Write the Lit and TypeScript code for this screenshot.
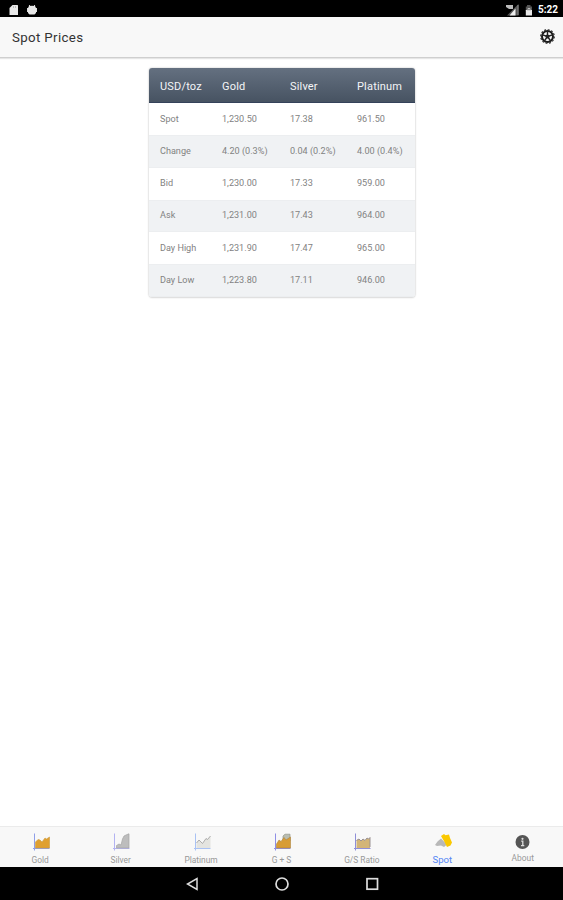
import { LitElement, html, svg, css } from "lit";
import { customElement } from "lit/decorators.js";
import { classMap } from "lit/directives/class-map.js";

const HEAD = ["USD/toz", "Gold", "Silver", "Platinum"];
const ROWS = [
  ["Spot", "1,230.50", "17.38", "961.50"],
  ["Change", "4.20 (0.3%)", "0.04 (0.2%)", "4.00 (0.4%)"],
  ["Bid", "1,230.00", "17.33", "959.00"],
  ["Ask", "1,231.00", "17.43", "964.00"],
  ["Day High", "1,231.90", "17.47", "965.00"],
  ["Day Low", "1,223.80", "17.11", "946.00"],
];

const axis = (color: string) => svg`<path d="M1.5 .5V17.5M0 15.5H16.5" fill="none" stroke=${color} stroke-width="1"/>`;

const ICONS: Record<string, unknown> = {
  Gold: svg`${axis("#8f9fe8")}<path d="M2.5 15V9L5 6.5 7 7 9 9 12 5 13.5 6 16.5 4V15Z" fill="#e0a030" stroke="#c99a40" stroke-width=".6"/>`,
  Silver: svg`${axis("#b3b3f2")}<path d="M3.5 15V12.5L6 11 8 12 9.5 6 11 3 13 2 16 .8V15Z" fill="#bdbdbd" stroke="#a5a5a5" stroke-width=".7"/>`,
  Platinum: svg`${axis("#a9c2f4")}<path d="M2.5 15V10L5 7 8.5 10.5 12 5.5 13.5 6.5 16.5 3V15Z" fill="#e4e4e0"/><path d="M2.5 10L5 7 8.5 10.5 12 5.5 13.5 6.5 16.5 3" fill="none" stroke="#a5a5a5" stroke-width=".9"/>`,
  "G + S": svg`${axis("#8f8fe6")}<path d="M9 8V3L11 1.2H16V8Z" fill="#b9bdb0" stroke="#92958a" stroke-width=".7"/><path d="M2.5 15V11L5 7 7 8.5 10 4.5 12 7 16.5 4V15Z" fill="#d89c35" stroke="#ad8540" stroke-width=".6"/>`,
  "G/S Ratio": svg`${axis("#8f8fd8")}<path d="M2.5 15V7L5 6 7 8 9 6 11 7.5 13 5 14.5 6 16 4.5V15Z" fill="#d3b577"/><path d="M2.5 7.5L5 6 7 8 9 6 11 7.5 13 5 14.5 6 16 4.5V14" fill="none" stroke="#9a9193" stroke-width="1"/>`,
  Spot: svg`<path d="M0 12L2.5 8.5 6 5.5 12 11.5 9 14 6 12.5 2 13Z" fill="#b8b8b8"/><path d="M6 3L9 1 10.5 2.2 14 1.5 15 5 17 9.5 15.5 12.5 12 14 9.5 9Z" fill="#fac800"/>`,
  About: svg`<circle cx="8.5" cy="9" r="7" fill="#555"/><circle cx="8.5" cy="5.8" r="1.1" fill="#ddd"/><path d="M7.2 8.2H8.8V12.5M7 12.7H10.3" fill="none" stroke="#ddd" stroke-width="1.3"/>`,
};

@customElement("app-root")
export class AppRoot extends LitElement {
  static styles = css`
    :host { display: flex; flex-direction: column; height: 900px; background: #fff; font-family: Roboto, sans-serif; overflow: hidden; }
    svg { display: block; }
    .status { height: 17px; box-sizing: border-box; background: #000; display: flex; align-items: center; padding: 2px 5px 0 9px; color: #fff; font-size: 10px; font-weight: 700; }
    .clock { margin-left: 5px; line-height: 14px; }
    .droid { margin-left: 8px; }
    .signal { margin-left: auto; }
    .battery { margin-left: 5px; }
    .bar { height: 41px; box-sizing: border-box; background: #f8f8f8; border-bottom: 1px solid #cfcfcf; box-shadow: 0 1px 1px #e6e6e6; display: flex; align-items: center; justify-content: space-between; padding: 0 8px 0 12px; }
    h1 { margin: 0; font-size: 13.3px; font-weight: 400; letter-spacing: .35px; color: #333; line-height: 20px; padding-top: 1px; }
    main { flex: 1; padding-top: 10px; }
    .card { width: 266px; margin-left: 149px; border-radius: 3px; overflow: hidden; box-shadow: 0 0 2px rgba(0,0,0,.26), 0 1px 2px rgba(0,0,0,.08); }
    .row { display: grid; grid-template-columns: 62px 68px 67px 1fr; align-items: center; height: 32.25px; padding: 0 0 1px 11px; box-sizing: border-box; font-size: 9.1px; color: #828282; }
    .row:nth-child(odd) { background: #f0f2f4; box-shadow: inset 0 1px #eceef0, inset 0 -1px #eceef0; }
    .row.head { height: 35px; padding: 1px 0 0 11px; background: linear-gradient(#647080, #465261); box-shadow: inset 0 -1px #35425a; color: #f4f5f7; font-size: 11px; letter-spacing: .18px; }
    .tabs { height: 41px; box-sizing: border-box; border-top: 1px solid #ebebeb; background: #f8f8f8; display: flex; }
    .tab { flex: 1; display: flex; flex-direction: column; align-items: center; padding-top: 6px; font-size: 8.4px; line-height: 10px; color: #999; }
    .tab svg { margin-left: 2px; margin-bottom: 4px; }
    .tab.about svg { margin: 0 0 2px; }
    .tab.active { color: #5686f5; font-size: 9.6px; }
    .nav { height: 33px; background: #000; display: flex; justify-content: center; align-items: center; gap: 74px; }
  `;

  render() {
    return html`
      <div class="status">
        <svg width="10" height="12" viewBox="0 0 10 12"><path d="M3.5 1H8.5Q9 1 9 1.5V11H.5V4Z" fill="#e8e8e8"/><path d="M4.5 2V4M6.5 2V4" stroke="#aaa" stroke-width=".7"/></svg>
        <svg class="droid" width="10" height="12" viewBox="0 0 10 12"><path d="M2 1L3.2 2.3H6.8L8 1M.5 4V8M9.5 4V8" fill="none" stroke="#ddd" stroke-width="1"/><path d="M2 2H8L9 4V9L7.5 10.5H2.5L1 9V4Z" fill="#e8e8e8"/></svg>
        <svg class="signal" width="14" height="12" viewBox="0 0 14 12"><path d="M1 11.5H12.5V0Z" fill="#555"/><path d="M3.5 11.5H9.5V4.5Z" fill="#eee"/><path d="M0 1H7V5H3L0 3Z" fill="#bbb"/><path d="M12 1V11" stroke="#888"/></svg>
        <svg class="battery" width="8" height="12" viewBox="0 0 8 12"><path d="M2 1H5.5V2.5H7V7H.8V2.5H2Z" fill="#555"/><path d="M.8 6H7V11.5H.8Z" fill="#e8e8e8"/><path d="M3 7V4.5H5V7" fill="none" stroke="#bbb"/></svg>
        <span class="clock">5:22</span>
      </div>
      <header class="bar">
        <h1>Spot Prices</h1>
        <svg width="15" height="16" viewBox="0 0 15 16">
          <circle cx="7.5" cy="7.5" r="5.5" fill="none" stroke="#1c1c1c" stroke-width="2"/>
          <circle cx="7.5" cy="7.5" r="6.8" fill="none" stroke="#222" stroke-width="1.1" stroke-dasharray="1.9 1.66"/>
          <circle cx="7.5" cy="7.5" r="2" fill="#1c1c1c"/>
          <path d="M7.5 7.5V2M7.5 7.5L2.5 5.8M7.5 7.5L12.5 5.8M7.5 7.5L4.3 12M7.5 7.5L10.7 12" stroke="#222" stroke-width="1.4"/>
        </svg>
      </header>
      <main>
        <div class="card">
          <div class="row head">${HEAD.map((t) => html`<span>${t}</span>`)}</div>
          ${ROWS.map((r) => html`<div class="row">${r.map((t) => html`<span>${t}</span>`)}</div>`)}
        </div>
      </main>
      <nav class="tabs">
        ${Object.keys(ICONS).map(
          (k) => html`<div class=${classMap({ tab: true, active: k === "Spot", about: k === "About" })}>
            <svg width="17" height="18" viewBox="0 0 17 18">${ICONS[k]}</svg><span>${k}</span>
          </div>`
        )}
      </nav>
      <div class="nav">
        <svg width="16" height="16" viewBox="0 0 16 16"><path d="M13 2.5V13.5L3.5 8Z" fill="none" stroke="#ddd" stroke-width="1.5"/></svg>
        <svg width="16" height="16" viewBox="0 0 16 16"><circle cx="8" cy="8" r="6" fill="none" stroke="#ddd" stroke-width="1.7"/></svg>
        <svg width="16" height="16" viewBox="0 0 16 16"><rect x="3" y="2.7" width="10.5" height="10.5" fill="none" stroke="#ddd" stroke-width="1.7"/></svg>
      </div>
    `;
  }
}
